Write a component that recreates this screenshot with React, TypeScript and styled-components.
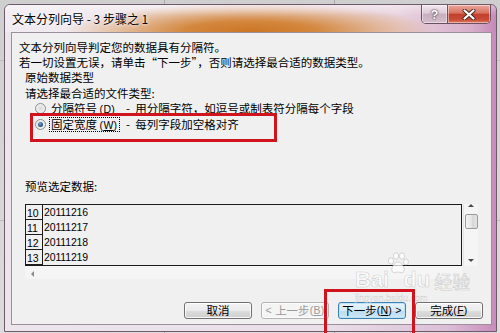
import React from 'react';
import styled, { createGlobalStyle } from 'styled-components';

const GlobalStyle = createGlobalStyle`
  html, body {
    margin: 0;
    padding: 0;
  }
  body {
    background: #d4d4d4;
    font-family: "Noto Sans CJK SC", "Liberation Sans", sans-serif;
  }
`;

const Page = styled.div`
  position: relative;
  box-sizing: border-box;
  width: 500px;
  height: 333px;
  overflow: hidden;
  padding: 4px 3px 0 4px;
  background:
    linear-gradient(90deg, transparent 164px, #a9a9a9 164px, #a9a9a9 165px, transparent 165px),
    linear-gradient(90deg, transparent 334px, #a9a9a9 334px, #a9a9a9 335px, transparent 335px),
    linear-gradient(180deg, transparent 60px, #bdbdbd 60px, #bdbdbd 61px, transparent 61px),
    linear-gradient(180deg, transparent 220px, #bdbdbd 220px, #bdbdbd 221px, transparent 221px),
    linear-gradient(#cfcfcf, #dcdcdc);
`;

const Window = styled.div`
  box-sizing: border-box;
  width: 493px;
  height: 328px;
  border: 1px solid #6f5a6c;
  border-radius: 6px 6px 0 0;
  padding: 0 4px 6px 6px;
  display: flex;
  flex-direction: column;
  background: linear-gradient(90deg, #ece5ec 0%, #e9dfe8 65%, #dcbfd6 90%, #c98cbb 100%);
`;

const TitleBar = styled.div`
  height: 27px;
  margin: 0 -4px 0 -6px;
  padding: 0 4px 0 7px;
  border-radius: 5px 5px 0 0;
  display: flex;
  align-items: flex-start;
  background:
    linear-gradient(180deg, rgba(255, 255, 255, 0.4), rgba(255, 255, 255, 0) 40%),
    radial-gradient(ellipse 185px 28px at 245px 26px,
      rgba(204, 118, 38, 1) 0%,
      rgba(210, 130, 52, 0.95) 35%,
      rgba(220, 160, 104, 0.6) 70%,
      rgba(230, 190, 160, 0) 100%),
    linear-gradient(90deg, #f1ecf1 0%, #eee4ea 40%, #e8d3df 80%, #d8aecb 95%, #c58ab8 100%);
`;

const Caption = styled.span`
  margin-top: 5px;
  font-size: 12px;
  line-height: 17px;
  color: #000;
  text-shadow: 0 0 5px rgba(255, 255, 255, 0.9), 0 0 2px rgba(255, 255, 255, 0.9);
`;

const CaptionButtons = styled.div`
  display: flex;
  margin-left: auto;
  margin-right: 1px;
  height: 18px;
  border: 1px solid #6b4f62;
  border-top: none;
  border-radius: 0 0 5px 5px;
  overflow: hidden;
`;

const CaptionButton = styled.div<{ $close?: boolean }>`
  width: ${p => (p.$close ? '42px' : '25px')};
  display: flex;
  align-items: center;
  justify-content: center;
  box-shadow: inset 0 0 0 1px rgba(255, 255, 255, 0.45);
  border-left: ${p => (p.$close ? '1px solid #6b4f62' : 'none')};
  font-family: "Liberation Sans", sans-serif;
  font-weight: bold;
  font-size: 13px;
  color: #fff;
  text-shadow: 0 0 1px #3c2a36, 0 0 2px #3c2a36;
  background: ${p =>
    p.$close
      ? 'linear-gradient(180deg, #eaa89b 0%, #d8715f 45%, #c2402b 52%, #c84b35 80%, #e0785f 100%)'
      : 'linear-gradient(180deg, #f3e8ef 0%, #ddcbd7 45%, #c8aebf 52%, #d6bfcd 100%)'};
`;

const Client = styled.div`
  box-sizing: border-box;
  height: 293px;
  border: 1px solid #9c8e9c;
  background: #f0f0f0;
  display: flex;
  flex-direction: column;
  font-size: 11.5px;
  line-height: 15px;
  color: #000;
`;

const Intro = styled.div`
  margin: 7px 0 0 7px;
`;

const Line = styled.div`
  height: 15px;
  white-space: nowrap;
`;

const Indented = styled.div<{ $top?: number }>`
  margin: ${p => p.$top ?? 0}px 0 0 13px;
  height: 15px;
  white-space: nowrap;
`;

const RadioRow = styled.div<{ $top?: number }>`
  display: flex;
  align-items: center;
  height: 15px;
  margin: ${p => p.$top ?? 0}px 0 0 23px;
  white-space: pre;
`;

const Radio = styled.span<{ $checked?: boolean }>`
  position: relative;
  box-sizing: border-box;
  width: 11px;
  height: 11px;
  margin-right: 3px;
  border-radius: 50%;
  border: 1px solid #8b8c8c;
  background: radial-gradient(circle at 50% 50%, #d9d9d9 0%, #ececec 55%, #fbfbfb 100%);

  &::after {
    content: '';
    display: ${p => (p.$checked ? 'block' : 'none')};
    position: absolute;
    left: 2px;
    top: 2px;
    width: 5px;
    height: 5px;
    border-radius: 50%;
    background: radial-gradient(circle at 40% 35%, #7fa9d3 0%, #2d5b8a 55%, #1c3e63 100%);
  }
`;

const KeyLabel = styled.span<{ $focus?: boolean }>`
  box-sizing: border-box;
  width: 71px;
  height: 15px;
  padding-left: 1px;
  border: 1px dotted ${p => (p.$focus ? '#000' : 'transparent')};
  line-height: 13px;
  white-space: nowrap;
`;

/* access key part, e.g. (D): narrow latin glyphs like the Windows dialog font */
const Key = styled.span`
  font-family: "Liberation Sans", sans-serif;
  font-size: 10.5px;
  letter-spacing: 0.3px;
`;

const Desc = styled.span`
  margin-left: 6px;
`;

const Preview = styled.div`
  display: grid;
  grid-template-columns: 437px 15px;
  grid-template-rows: 62px 13px;
  column-gap: 1px;
  margin: 10px 0 0 13px;
`;

const DataBox = styled.div`
  box-sizing: border-box;
  border: 1px solid #1c1c1c;
  overflow: hidden;
`;

const DataRow = styled.div`
  display: flex;
  height: 15px;
`;

const RowNum = styled.div`
  box-sizing: border-box;
  width: 17px;
  height: 15px;
  border-right: 1px solid #1c1c1c;
  border-bottom: 1px solid #1c1c1c;
  padding-left: 1px;
  font-family: "Liberation Sans", sans-serif;
  font-size: 10.5px;
  line-height: 16px;
`;

const RowData = styled.div`
  padding-left: 1px;
  font-family: "Liberation Sans", sans-serif;
  font-size: 10.5px;
  line-height: 15px;
  letter-spacing: -0.15px;
`;

const VScroll = styled.div`
  box-sizing: border-box;
  display: flex;
  flex-direction: column;
  align-items: center;
  background: #f5f5f5;
  border-left: 1px solid #e6e6e6;
`;

const Arrow = styled.span<{ $dir: 'up' | 'down' | 'left' }>`
  width: 0;
  height: 0;
  border: 3px solid transparent;
  ${p =>
    p.$dir === 'up'
      ? 'border-bottom: 3px solid #4a4a4a; border-top: 0;'
      : p.$dir === 'down'
      ? 'border-top: 3px solid #4a4a4a; border-bottom: 0; margin-top: auto; margin-bottom: 4px;'
      : 'border-right: 3px solid #8a8a8a; border-left: 0; margin: 5px 0 0 6px;'}
`;

const Thumb = styled.div`
  box-sizing: border-box;
  width: 13px;
  height: 15px;
  margin-top: 7px;
  border: 1px solid #9a9a9a;
  border-radius: 2px;
  background: linear-gradient(90deg, #f4f4f4, #e4e4e4 50%, #d6d6d6 51%, #e2e2e2);
`;

const HScroll = styled.div`
  display: flex;
  background: #f5f5f5;
`;

const ButtonBar = styled.div`
  display: flex;
  justify-content: flex-end;
  gap: 9px;
  margin: 23px 8px 0 0;
`;

const Button = styled.div<{ $disabled?: boolean; $focus?: boolean }>`
  box-sizing: border-box;
  width: 68px;
  height: 17px;
  display: flex;
  align-items: center;
  justify-content: center;
  border-radius: 3px;
  font-size: 11.5px;
  white-space: pre;
  border: 1px solid ${p => (p.$disabled ? '#b3b3b3' : p.$focus ? '#3c7fb1' : '#707070')};
  color: ${p => (p.$disabled ? '#9a9a9a' : '#000')};
  box-shadow: inset 0 0 0 1px ${p => (p.$focus ? '#bfe3f7' : 'rgba(255,255,255,0.8)')};
  background: ${p =>
    p.$disabled
      ? '#f4f4f4'
      : p.$focus
      ? 'linear-gradient(180deg, #e8f4fb 0%, #d6ebf7 50%, #b9dcf1 51%, #cfe7f5 100%)'
      : 'linear-gradient(180deg, #f3f3f3 0%, #ebebeb 50%, #dddddd 51%, #cfcfcf 100%)'};
`;

const Callout = styled.div<{ $x: number; $y: number; $w: number; $h: number }>`
  position: absolute;
  left: ${p => p.$x}px;
  top: ${p => p.$y}px;
  width: ${p => p.$w}px;
  height: ${p => p.$h}px;
  box-sizing: border-box;
  border: 3px solid #d0141e;
  pointer-events: none;
`;

const Watermark = styled.div`
  position: absolute;
  left: 355px;
  top: 260px;
  display: flex;
  flex-direction: column;
  pointer-events: none;
  color: rgba(255, 255, 255, 0.65);
  -webkit-text-stroke: 0.6px rgba(150, 150, 150, 0.45);
`;

const MarkLogo = styled.div`
  display: flex;
  align-items: flex-end;
  height: 32px;
  font-family: "Liberation Sans", sans-serif;
  font-weight: bold;
  font-size: 22px;
  line-height: 24px;
`;

const MarkCn = styled.span`
  margin-left: 4px;
  font-family: "Noto Sans CJK SC", sans-serif;
  font-size: 18px;
  font-weight: normal;
  line-height: 22px;
`;

const MarkUrl = styled.div`
  margin-top: 1px;
  font-family: "Liberation Sans", sans-serif;
  font-size: 9px;
  line-height: 10px;
  -webkit-text-stroke: 0.3px rgba(150, 150, 150, 0.5);
`;

const rows = [
  ['10', '20111216'],
  ['11', '20111217'],
  ['12', '20111218'],
  ['13', '20111219'],
];

const Paw = () => (
  <svg width="22" height="26" viewBox="0 0 22 26" style={{ marginBottom: 14, marginLeft: -2, marginRight: -6 }}>
    <g fill="rgba(255,255,255,0.7)" stroke="rgba(150,150,150,0.45)" strokeWidth="0.8">
      <ellipse cx="4" cy="9" rx="2.6" ry="3.2" />
      <ellipse cx="9" cy="4" rx="2.6" ry="3.2" />
      <ellipse cx="15" cy="4" rx="2.6" ry="3.2" />
      <ellipse cx="19" cy="10" rx="2.4" ry="3" />
      <path d="M11 10 C7 10 4 16 5 19 C6 22 9 20 11 20 C13 20 16 22 17 19 C18 16 15 10 11 10 Z" />
    </g>
  </svg>
);

export default function App() {
  return (
    <>
      <GlobalStyle />
      <Page>
        <Window>
          <TitleBar>
            <Caption>文本分列向导 - 3 步骤之 1</Caption>
            <CaptionButtons>
              <CaptionButton>?</CaptionButton>
              <CaptionButton $close>
                <svg width="14" height="11" viewBox="0 0 14 11">
                  <path d="M2.5 1.5 L11.5 9.5 M11.5 1.5 L2.5 9.5" stroke="#4a2a22" strokeWidth="4" strokeLinecap="round" />
                  <path d="M2.5 1.5 L11.5 9.5 M11.5 1.5 L2.5 9.5" stroke="#fff" strokeWidth="2.2" strokeLinecap="round" />
                </svg>
              </CaptionButton>
            </CaptionButtons>
          </TitleBar>
          <Client>
            <Intro>
              <Line>文本分列向导判定您的数据具有分隔符。</Line>
              <Line>若一切设置无误，请单击“下一步”，否则请选择最合适的数据类型。</Line>
            </Intro>
            <Indented>原始数据类型</Indented>
            <Indented $top={1}>请选择最合适的文件类型:</Indented>
            <RadioRow>
              <Radio />
              <KeyLabel>分隔符号 <Key>(<u>D</u>)</Key></KeyLabel>
              <Desc>-  用分隔字符，如逗号或制表符分隔每个字段</Desc>
            </RadioRow>
            <RadioRow $top={1}>
              <Radio $checked />
              <KeyLabel $focus>固定宽度 <Key>(<u>W</u>)</Key></KeyLabel>
              <Desc>-  每列字段加空格对齐</Desc>
            </RadioRow>
            <Indented $top={47}>预览选定数据:</Indented>
            <Preview>
              <DataBox>
                {rows.map(([n, v]) => (
                  <DataRow key={n}>
                    <RowNum>{n}</RowNum>
                    <RowData>{v}</RowData>
                  </DataRow>
                ))}
              </DataBox>
              <VScroll>
                <Arrow $dir="up" />
                <Thumb />
                <Arrow $dir="down" />
              </VScroll>
              <HScroll>
                <Arrow $dir="left" />
              </HScroll>
            </Preview>
            <ButtonBar>
              <Button>取消</Button>
              <Button $disabled><Key>{'< '}</Key>上一步<Key>(<u>B</u>)</Key></Button>
              <Button $focus>下一步<Key>(<u>N</u>){' >'}</Key></Button>
              <Button>完成<Key>(<u>F</u>)</Key></Button>
            </ButtonBar>
          </Client>
        </Window>
        <Watermark>
          <MarkLogo>
            Bai
            <Paw />
            du
            <MarkCn>经验</MarkCn>
          </MarkLogo>
          <MarkUrl>jingyan.baidu.com</MarkUrl>
        </Watermark>
        <Callout $x={30} $y={113} $w={247} $h={29} />
        <Callout $x={324} $y={289} $w={91} $h={50} />
      </Page>
    </>
  );
}
